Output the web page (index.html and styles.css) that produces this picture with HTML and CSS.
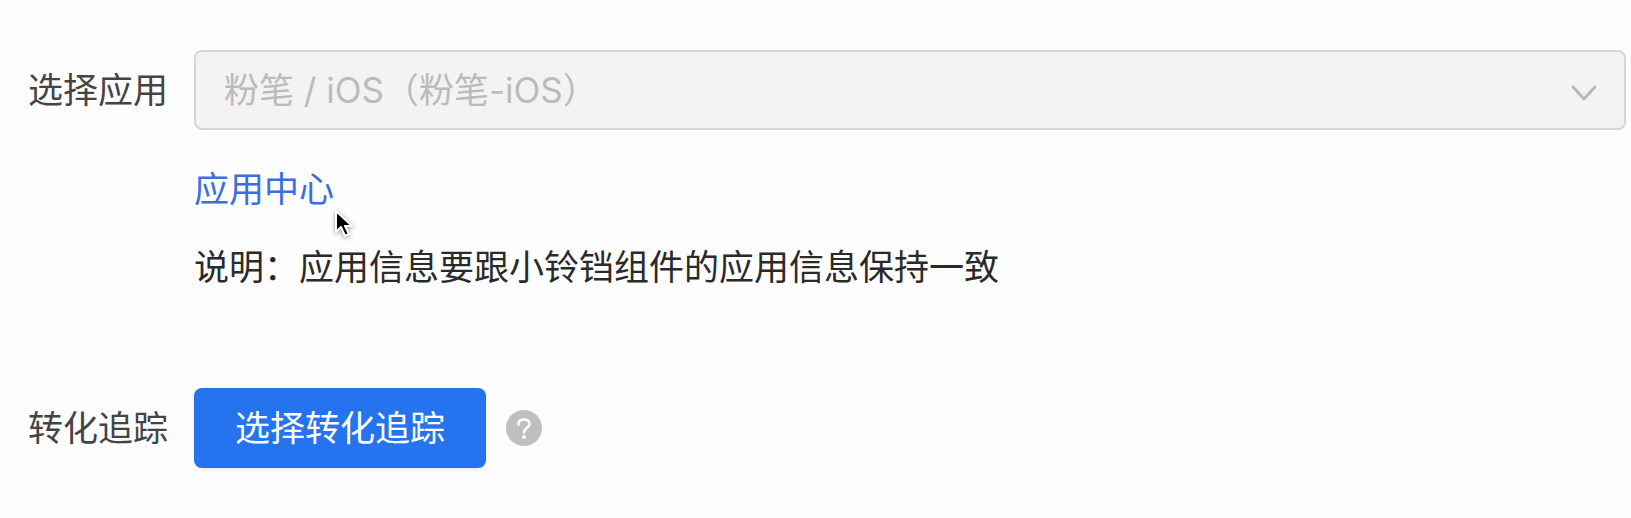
FILE: index.html
```html
<!DOCTYPE html>
<html lang="zh-CN">
<head>
    <meta charset="UTF-8">
    <meta name="viewport" content="width=device-width, initial-scale=1.0">
    <title>选择应用</title>
    <link rel="stylesheet" href="styles.css">
</head>
<body>

    <form class="form">
        <div class="row">
            <label class="label" for="app">选择应用</label>
            <div class="content">
                <div class="select-box">
                    <select class="select" id="app" disabled>
                        <option>粉笔 / iOS（粉笔-iOS）</option>
                    </select>
                    <svg class="arrow" viewBox="0 0 28 24" aria-hidden="true">
                        <path d="M3 9L14 21L25 9" fill="none" stroke="#b8b8b8" stroke-width="3" stroke-linecap="round" stroke-linejoin="round"/>
                    </svg>
                </div>
                <div class="link-line">
                    <a class="link" href="#">应用中心</a>
                    <svg class="cursor" viewBox="0 0 24 32" aria-hidden="true">
                        <path d="M3 2V23L8 18L12 27L16 25L12 17H19Z" fill="#000" stroke="#fff" stroke-width="2" stroke-linejoin="round"/>
                    </svg>
                </div>
                <p class="note">说明：应用信息要跟小铃铛组件的应用信息保持一致</p>
            </div>
        </div>

        <div class="row">
            <label class="label" for="track">转化追踪</label>
            <div class="content actions">
                <button class="button" id="track" type="button">选择转化追踪</button>
                <svg class="help" viewBox="0 0 36 36" aria-hidden="true">
                    <circle cx="18" cy="18" r="18" fill="#bfbfbf"/>
                    <path d="M12.500 14.500C12.500 11 14.500 9.500 18 9.500C21.500 9.500 23.500 11.500 23.500 14.200C23.500 18 18 18 18 22.500" fill="none" stroke="#fff" stroke-width="2.600" stroke-linecap="round"/>
                    <circle cx="18" cy="27" r="2" fill="#fff"/>
                </svg>
            </div>
        </div>
    </form>

</body>
</html>
```
FILE: styles.css
```css
body {
    margin: 0;
    background-color: #fdfdfd;
    font-family: Inter, "Noto Sans CJK SC", sans-serif;
    font-size: 35px;
    line-height: 48px;
    color: #333;
}

.form {
    display: flex;
    flex-direction: column;
    gap: 97px;
    padding: 50px 5px 50px 28px;
}

.row {
    display: flex;
    align-items: flex-start;
    gap: 26px;
}

.label {
    flex: none;
    line-height: 80px;
    color: #444;
}

.content {
    flex: 1;
}

.select-box {
    display: grid;
    align-items: center;
}

.select {
    grid-area: 1 / 1;
    box-sizing: border-box;
    width: 100%;
    height: 80px;
    padding: 0 80px 0 28px;
    border: 2px solid #d6d6d6;
    border-radius: 8px;
    background-color: #f3f3f3;
    color: #bbb;
    font: inherit;
    appearance: none;
    opacity: 1;
}

.arrow {
    grid-area: 1 / 1;
    justify-self: end;
    width: 28px;
    height: 24px;
    margin-right: 28px;
    pointer-events: none;
}

.link-line {
    position: relative;
    width: fit-content;
    margin-top: 35px;
}

.link {
    color: #3a6fe0;
    text-decoration: none;
}

/* pointer resting just below the link */
.cursor {
    position: absolute;
    top: 44px;
    left: 139px;
    width: 24px;
    height: 32px;
    filter: drop-shadow(0 1px 2px rgba(0, 0, 0, 0.4));
}

.note {
    margin: 30px 0 0;
    color: #2a2a2a;
}

.actions {
    display: flex;
    align-items: center;
    gap: 20px;
}

.button {
    height: 80px;
    padding: 0 41px;
    border: none;
    border-radius: 8px;
    background-color: #2673f0;
    box-shadow: 0 2px 4px rgba(38, 115, 240, 0.1);
    color: #fff;
    font: inherit;
    cursor: pointer;
}

.help {
    width: 36px;
    height: 36px;
}
```
